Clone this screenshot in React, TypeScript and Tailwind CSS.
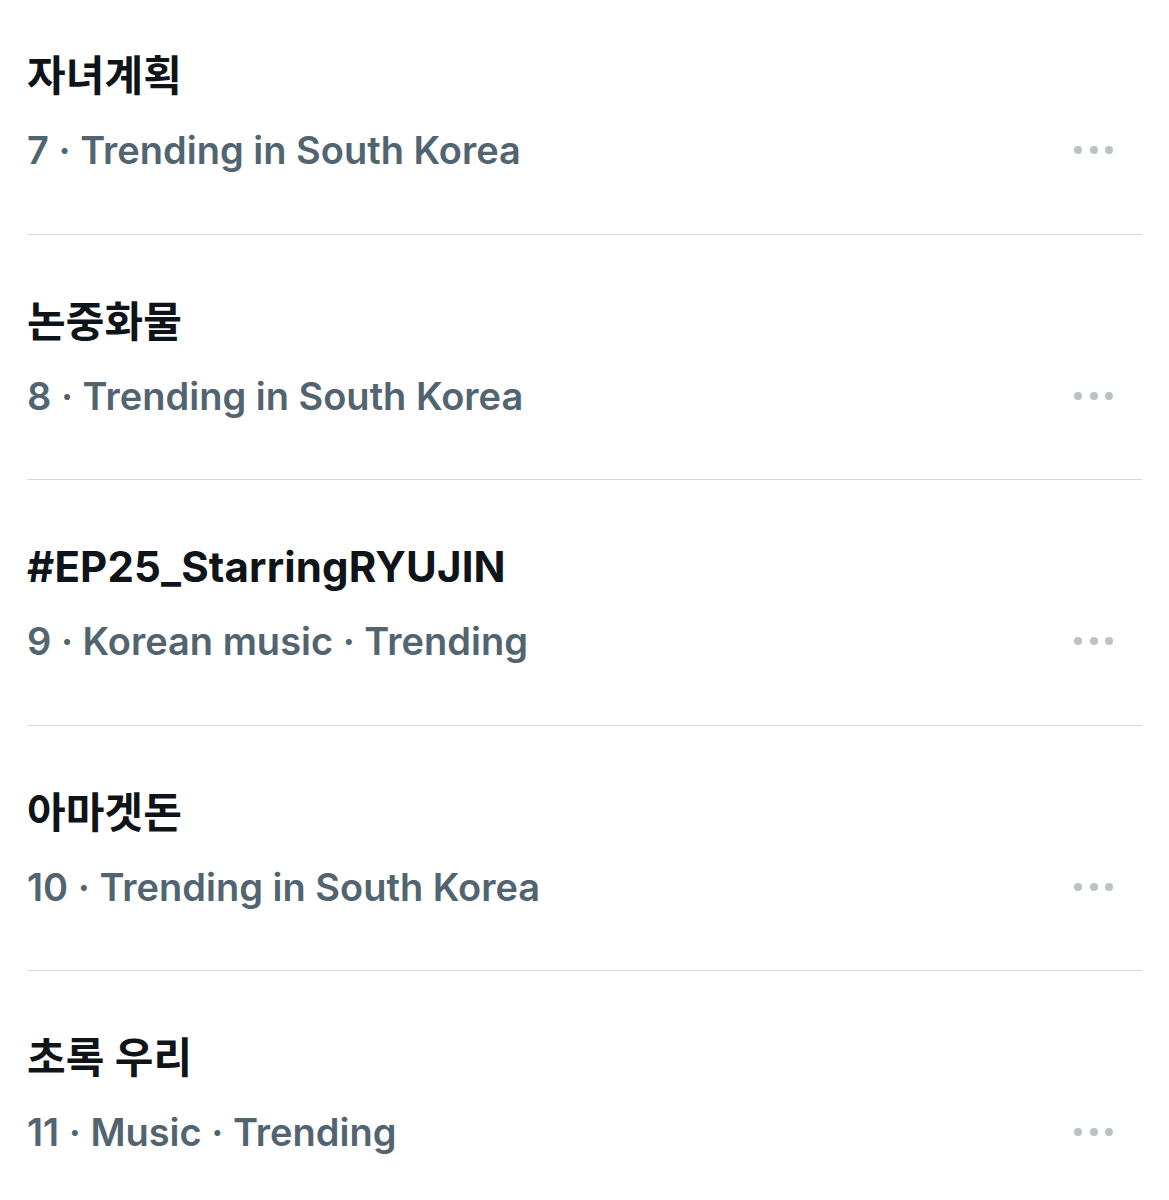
const trends = [
  { title: '자녀계획', meta: '7 · Trending in South Korea' },
  { title: '논중화물', meta: '8 · Trending in South Korea' },
  { title: '#EP25_StarringRYUJIN', meta: '9 · Korean music · Trending' },
  { title: '아마겟돈', meta: '10 · Trending in South Korea' },
  { title: '초록 우리', meta: '11 · Music · Trending' },
];

const MoreDots = () => (
  <div className="flex items-center gap-[7.5px] mr-[29px]">
    <span className="w-[8px] h-[8px] rounded-full bg-[#b9c2c9]" />
    <span className="w-[8px] h-[8px] rounded-full bg-[#b9c2c9]" />
    <span className="w-[8px] h-[8px] rounded-full bg-[#b9c2c9]" />
  </div>
);

export default function App() {
  return (
    <div
      className="w-[1169px] h-[1200px] overflow-hidden bg-white"
      style={{ fontFamily: 'Inter, "Noto Sans CJK KR", sans-serif' }}
    >
      <div className="-mt-[11px] px-[27px]">
        {trends.map((t, i) => (
          <div
            key={t.title}
            className={`h-[245.6px] flex flex-col pt-[63px] ${i < trends.length - 1 ? 'border-b border-[#d3d9dd]' : ''}`}
          >
            <div className="text-[42px] leading-[48px] font-bold text-[#0f1419] tracking-[0.15px]">
              {t.title}
            </div>
            <div className="mt-[26px] flex items-center justify-between">
              <div className="text-[38px] leading-[48px] font-semibold text-[#536471]">
                {t.meta}
              </div>
              <MoreDots />
            </div>
          </div>
        ))}
      </div>
    </div>
  );
}
